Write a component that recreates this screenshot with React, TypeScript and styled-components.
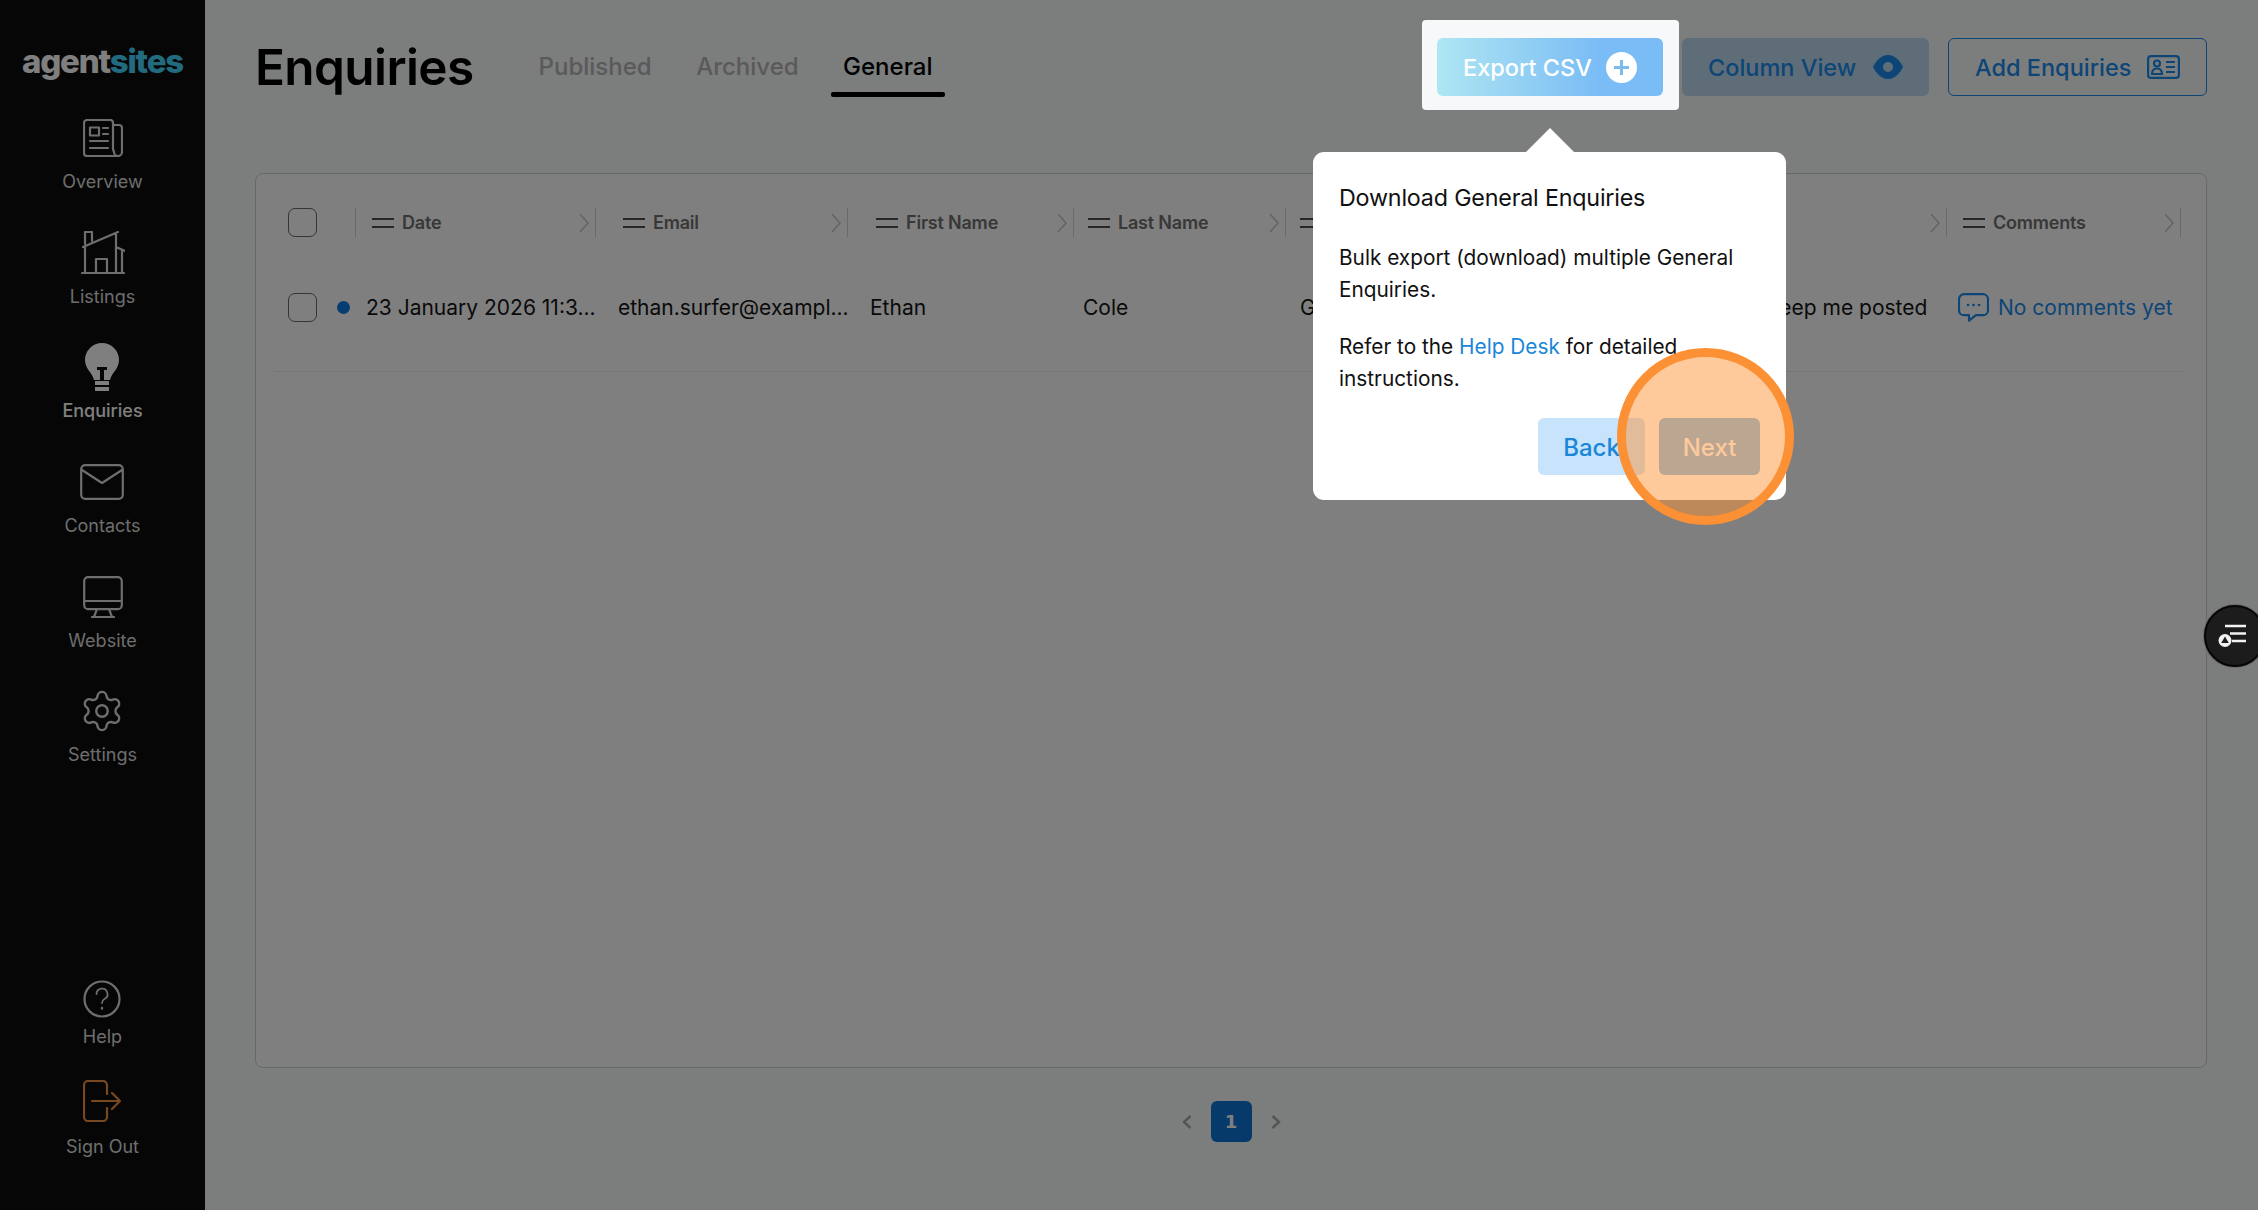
import React from 'react'
import styled, { createGlobalStyle } from 'styled-components'
import { Settings } from 'lucide-react'

const GlobalStyle = createGlobalStyle`
	html, body {
		margin: 0;
		padding: 0;
		background: #f9fafb;
		font-family: Inter, "Liberation Sans", sans-serif;
	}
	* { box-sizing: border-box; }
`

const Page = styled.div`
	display: flex;
	width: 2258px;
	height: 1210px;
	overflow: hidden;
	background: #f9fafb;
`

const Sidebar = styled.aside`
	display: flex;
	flex-direction: column;
	align-items: center;
	flex: 0 0 205px;
	padding-bottom: 51px;
	background: #0c0c0c;
`

const Logo = styled.div`
	height: 113px;
	padding-top: 38px;
	font-size: 33px;
	line-height: 46px;
	font-weight: 800;
	letter-spacing: -1.2px;
	color: #fff;
	span { color: #45d6ff; }
`

const NavItem = styled.a<{ $height?: number; $iconHeight?: number; $labelGap?: number; $active?: boolean }>`
	display: flex;
	flex-direction: column;
	align-items: center;
	height: ${p => p.$height ?? 114.7}px;
	color: ${p => (p.$active ? '#fff' : '#dcdcdc')};
	font-size: 18px;
	line-height: 24px;
	font-weight: ${p => (p.$active ? 500 : 400)};
	svg { display: block; }
	div {
		display: flex;
		align-items: center;
		justify-content: center;
		height: ${p => p.$iconHeight ?? 50}px;
		margin-bottom: ${p => p.$labelGap ?? 7}px;
	}
`

const SidebarBottom = styled.div`
	display: flex;
	flex-direction: column;
	align-items: center;
	margin-top: auto;
`

const Main = styled.main`
	flex: 1;
	min-width: 0;
	padding: 38px 51px 0 50px;
`

const Header = styled.header`
	display: flex;
	align-items: center;
	height: 58px;
`

const Title = styled.h1`
	margin: 0 53px 0 0;
	font-size: 49.5px;
	line-height: 58px;
	font-weight: 600;
	letter-spacing: -0.6px;
	color: #000;
`

const Tabs = styled.nav`
	display: flex;
	gap: 20.5px;
`

const Tab = styled.a<{ $active?: boolean }>`
	position: relative;
	padding: 0 12px;
	font-size: 24px;
	line-height: 58px;
	font-weight: 500;
	color: ${p => (p.$active ? '#000' : '#b4b4b4')};
	&::after {
		content: '';
		display: ${p => (p.$active ? 'block' : 'none')};
		position: absolute;
		left: 0;
		right: 0;
		bottom: -1px;
		height: 5px;
		border-radius: 2px;
		background: #000;
	}
`

const Actions = styled.div`
	display: flex;
	align-items: center;
	margin-left: auto;
`

const Button = styled.button`
	display: flex;
	align-items: center;
	height: 58px;
	padding: 0 26px;
	border: 0;
	border-radius: 6px;
	font: 500 23.5px Inter, "Liberation Sans", sans-serif;
	white-space: nowrap;
	svg { flex-shrink: 0; }
`

const ExportButton = styled(Button)`
	position: relative;
	z-index: 20;
	justify-content: space-between;
	width: 226px;
	color: #fff;
	background: linear-gradient(90deg, #aee6f2 0%, #7abcf6 72%);
	&::before {
		content: '';
		position: absolute;
		z-index: -2;
		inset: -18px -16px -14px -15px;
		border-radius: 4px;
		background: #f6f8fa;
	}
	&::after {
		content: '';
		position: absolute;
		z-index: -1;
		inset: 0;
		border-radius: 6px;
		background: linear-gradient(90deg, #aee6f2 0%, #7abcf6 72%);
	}
`

const ColumnButton = styled(Button)`
	justify-content: space-between;
	width: 247px;
	margin-left: 19px;
	color: #1a8cec;
	background: #bedaf2;
`

const AddButton = styled(Button)`
	justify-content: space-between;
	width: 259px;
	margin-left: 19px;
	color: #1a8cec;
	background: transparent;
	border: 1.5px solid #1a8cec;
`

const Card = styled.section`
	height: 895px;
	margin-top: 77px;
	padding: 34px 22px 0 18px;
	border: 1px solid #cfd0d1;
	border-radius: 8px;
	background: #fff;
`

const HeadRow = styled.div`
	display: grid;
	grid-template-columns: 67px 240px 252px 226px 212px 335px 326px 235px;
	height: 29px;
	padding-left: 14px;
`

const Check = styled.span`
	display: block;
	width: 29px;
	height: 29px;
	border: 1px solid #6a6a6a;
	border-radius: 7px;
	background: #fff;
`

const HeadCell = styled.div<{ $pad?: number; $last?: boolean }>`
	display: flex;
	align-items: center;
	gap: 8px;
	padding: 0 6px 0 ${p => p.$pad ?? 16}px;
	border-left: 1px solid #d4d4d4;
	border-right: ${p => (p.$last ? '1px solid #d4d4d4' : '0')};
	font-size: 18px;
	font-weight: 600;
	letter-spacing: -0.2px;
	color: #707070;
	svg:last-child { margin-left: auto; }
`

const Row = styled.div`
	display: grid;
	grid-template-columns: 49px 29px 252px 252px 213px 217px 466px 192px 1fr;
	align-items: center;
	height: 135px;
	padding: 7px 0 0 14px;
	border-bottom: 1px solid #ececec;
	font-size: 21px;
	color: #141414;
	white-space: nowrap;
`

const Dot = styled.span`
	display: block;
	width: 13px;
	height: 13px;
	border-radius: 50%;
	background: #0a7ae0;
`

const CommentLink = styled.a`
	display: flex;
	align-items: center;
	gap: 9px;
	color: #1a8cec;
`

const Pagination = styled.nav`
	display: flex;
	align-items: center;
	justify-content: center;
	gap: 19px;
	margin-top: 33px;
`

const PageNumber = styled.span`
	display: flex;
	align-items: center;
	justify-content: center;
	width: 41px;
	height: 41px;
	border-radius: 6px;
	background: #0a74d6;
	color: #fff;
	font: 700 18px "DejaVu Sans", sans-serif;
`

const Scrim = styled.div`
	position: fixed;
	inset: 0;
	z-index: 10;
	background: rgba(0, 0, 0, 0.5);
`

const Popover = styled.div`
	position: fixed;
	z-index: 30;
	left: 1313px;
	top: 152px;
	width: 473px;
	height: 348px;
	padding: 27px 26px 25px;
	border-radius: 11px;
	background: #fff;
	color: #111;
	&::before {
		content: '';
		position: absolute;
		left: 213px;
		top: -24px;
		border-left: 24px solid transparent;
		border-right: 24px solid transparent;
		border-bottom: 24px solid #fff;
	}
`

const PopoverTitle = styled.h2`
	margin: 1px 0 26px;
	font-size: 23.3px;
	line-height: 36px;
	font-weight: 400;
	letter-spacing: -0.2px;
`

const PopoverText = styled.p`
	margin: 0 0 26px;
	font-size: 20.8px;
	line-height: 31.5px;
	a { color: #1a86d8; }
`

const PopoverActions = styled.div`
	position: absolute;
	right: 26px;
	bottom: 25px;
	display: flex;
	gap: 14px;
`

const PopoverButton = styled.button<{ $primary?: boolean }>`
	height: 57px;
	width: ${p => (p.$primary ? 101 : 107)}px;
	border: 0;
	border-radius: 6px;
	padding: 2px 0 0;
	font: 500 24px Inter, "Liberation Sans", sans-serif;
	color: ${p => (p.$primary ? '#fff' : '#1a86d8')};
	background: ${p => (p.$primary ? '#7dbaee' : '#c8e4fd')};
`

const Pulse = styled.div`
	position: fixed;
	z-index: 40;
	left: 1617px;
	top: 348px;
	width: 177px;
	height: 177px;
	border: 9px solid #fb9035;
	border-radius: 50%;
	background: rgba(253, 145, 50, 0.49);
`

const HelpWidget = styled.div`
	position: fixed;
	z-index: 50;
	left: 2204px;
	top: 605px;
	display: flex;
	align-items: center;
	justify-content: center;
	width: 62px;
	height: 62px;
	padding-right: 6px;
	border: 2px solid #050505;
	border-radius: 50%;
	background: #1c1c1c;
	box-shadow: 0 0 0 1px #666;
`

const Burger = () => (
	<svg width="22" height="10" viewBox="0 0 22 10" fill="none" stroke="#4f4f4f" strokeWidth="2">
		<path d="M0 1h22M0 9h22" />
	</svg>
)

const Chevron = () => (
	<svg width="10" height="20" viewBox="0 0 10 20" fill="none" stroke="#c8c8c8" strokeWidth="1.6">
		<path d="M1 1l8 9-8 9" />
	</svg>
)

const Column = ({ label, pad, last }: { label?: string; pad?: number; last?: boolean }) => (
	<HeadCell $pad={pad} $last={last}>
		<Burger />
		{label}
		<Chevron />
	</HeadCell>
)

const line = { fill: 'none', stroke: 'currentColor', strokeWidth: 2.2, strokeLinecap: 'round', strokeLinejoin: 'round' } as const

export default function App() {
	return (
		<Page>
			<GlobalStyle />
			<Sidebar>
				<Logo>agent<span>sites</span></Logo>
				<NavItem>
					<div>
						<svg width="40" height="38" viewBox="0 0 40 38" {...line}>
							<path d="M30 6V4a3 3 0 0 0-3-3H4a3 3 0 0 0-3 3v30a3 3 0 0 0 3 3h30M30 6h6a3 3 0 0 1 3 3v24a4 4 0 0 1-8 0c0-1-1-2-1-3V6" />
							<path d="M7 8.5h9v8H7zM20 9h5M20 15h5M7 22h18M7 29h18" />
						</svg>
					</div>
					Overview
				</NavItem>
				<NavItem>
					<div>
						<svg width="44" height="43" viewBox="0 0 44 43" {...line}>
							<path d="M1 42h42M2 16L37 1M4 15V42M4 1h7v9M4 1v12M35 2V42M35 16l9 4M41 20V42M15 42V28h11v14" />
						</svg>
					</div>
					Listings
				</NavItem>
				<NavItem $active>
					<div>
						<svg width="34" height="48" viewBox="0 0 34 48">
							<path fill="#fff" d="M17 0a17 17 0 0 1 17 17c0 9-7 12-9 20H9C7 29 0 26 0 17A17 17 0 0 1 17 0z" />
							<path fill="#0c0c0c" d="M12 24h10v3h-3v10h-4V27h-3z" />
							<path fill="#fff" d="M10 38h14v4H10zM10 44h14v4H10z" />
						</svg>
					</div>
					Enquiries
				</NavItem>
				<NavItem>
					<div>
						<svg width="44" height="36" viewBox="0 0 44 36" {...line}>
							<rect x="1.2" y="1.2" width="41.6" height="33.6" rx="4" />
							<path d="M2 6l20 13L42 6" />
						</svg>
					</div>
					Contacts
				</NavItem>
				<NavItem>
					<div>
						<svg width="40" height="42" viewBox="0 0 40 42" {...line}>
							<rect x="1.2" y="1.2" width="37.6" height="32" rx="4" />
							<path d="M1.5 25h37M14 33l-3 8h18l-3-8M9 41h22" />
						</svg>
					</div>
					Website
				</NavItem>
				<NavItem>
					<div>
						<Settings size={46} strokeWidth={1.25} />
					</div>
					Settings
				</NavItem>
				<SidebarBottom>
					<NavItem $height={100} $iconHeight={42} $labelGap={5}>
						<div>
							<svg width="38" height="38" viewBox="0 0 38 38" {...line}>
								<circle cx="19" cy="19" r="17.5" />
								<path d="M13.5 14a5.5 5.5 0 1 1 8 5c-1.8 1-2.5 2-2.5 4" strokeWidth="1.8" />
								<path d="M19 28v.5" strokeWidth="2.4" />
							</svg>
						</div>
						Help
					</NavItem>
					<NavItem $height={81} $iconHeight={46} $labelGap={11}>
						<div>
							<svg width="38" height="42" viewBox="0 0 38 42" {...line} stroke="#f09040">
								<path d="M24 14V5a4 4 0 0 0-4-4H5a4 4 0 0 0-4 4v32a4 4 0 0 0 4 4h15a4 4 0 0 0 4-4v-9" />
								<path d="M9 21h27M29 13l8 8-8 8" />
							</svg>
						</div>
						Sign Out
					</NavItem>
				</SidebarBottom>
			</Sidebar>
			<Main>
				<Header>
					<Title>Enquiries</Title>
					<Tabs>
						<Tab>Published</Tab>
						<Tab>Archived</Tab>
						<Tab $active>General</Tab>
					</Tabs>
					<Actions>
						<ExportButton>
							Export CSV
							<svg width="31" height="31" viewBox="0 0 31 31">
								<circle cx="15.5" cy="15.5" r="15.5" fill="#fff" />
								<path d="M15.5 8v15M8 15.5h15" stroke="#7dbaee" strokeWidth="3" />
							</svg>
						</ExportButton>
						<ColumnButton>
							Column View
							<svg width="30" height="24" viewBox="0 0 30 24">
								<path fill="#1a8cec" fillRule="evenodd" d="M15 0c7 0 12 6 15 12-3 6-8 12-15 12S3 18 0 12C3 6 8 0 15 0zm0 7a5 5 0 1 0 0 10 5 5 0 0 0 0-10z" />
							</svg>
						</ColumnButton>
						<AddButton>
							Add Enquiries
							<svg width="33" height="24" viewBox="0 0 33 24" fill="none" stroke="#1a8cec" strokeWidth="2.2">
								<rect x="1.1" y="1.1" width="30.8" height="21.8" rx="3" />
								<circle cx="10" cy="8.5" r="3" />
								<path d="M5 19c0-4 2-5.500 5-5.500s5 1.500 5 5.500zM19 7h9M19 12h9M19 17h9" />
							</svg>
						</AddButton>
					</Actions>
				</Header>
				<Card>
					<HeadRow>
						<Check />
						<Column label="Date" />
						<Column label="Email" pad={27} />
						<Column label="First Name" pad={28} />
						<Column label="Last Name" pad={14} />
						<Column label="Category" pad={14} />
						<Column label="Message" />
						<Column label="Comments" last />
					</HeadRow>
					<Row>
						<Check />
						<Dot />
						<span>23 January 2026 11:3...</span>
						<span>ethan.surfer@exampl...</span>
						<span>Ethan</span>
						<span>Cole</span>
						<span>General Enquiry</span>
						<span>Keep me posted</span>
						<CommentLink>
							<svg width="31" height="29" viewBox="0 0 31 29" fill="none" stroke="#1a8cec" strokeWidth="2.2" strokeLinejoin="round">
								<path d="M6 1.200h19a5 5 0 0 1 5 5v11a5 5 0 0 1-5 5h-7l-7 5.500v-5.500H6a5 5 0 0 1-5-5v-11a5 5 0 0 1 5-5z" />
								<path d="M10 12h.1M15.500 12h.1M21 12h.1" strokeWidth="2.6" strokeLinecap="round" />
							</svg>
							No comments yet
						</CommentLink>
					</Row>
				</Card>
				<Pagination>
					<svg width="10" height="14" viewBox="0 0 10 14" fill="none" stroke="#a8a8a8" strokeWidth="2.4">
						<path d="M8.500 1L2 7l6.500 6" />
					</svg>
					<PageNumber>1</PageNumber>
					<svg width="10" height="14" viewBox="0 0 10 14" fill="none" stroke="#a8a8a8" strokeWidth="2.4">
						<path d="M1.500 1L8 7l-6.500 6" />
					</svg>
				</Pagination>
			</Main>
			<Scrim />
			<Popover>
				<PopoverTitle>Download General Enquiries</PopoverTitle>
				<PopoverText>Bulk export (download) multiple General Enquiries.</PopoverText>
				<PopoverText>Refer to the <a>Help Desk</a> for detailed instructions.</PopoverText>
				<PopoverActions>
					<PopoverButton>Back</PopoverButton>
					<PopoverButton $primary>Next</PopoverButton>
				</PopoverActions>
			</Popover>
			<Pulse />
			<HelpWidget>
				<svg width="28" height="24" viewBox="0 0 28 24">
					<path d="M7 2h21M12 9.500h16M14 17h14" stroke="#f2f2f2" strokeWidth="2.4" fill="none" />
					<circle cx="7" cy="16.500" r="6.500" fill="#f2f2f2" />
					<path d="M7 12.500l3.800 6.500H3.200z" fill="#1c1c1c" />
				</svg>
			</HelpWidget>
		</Page>
	)
}
